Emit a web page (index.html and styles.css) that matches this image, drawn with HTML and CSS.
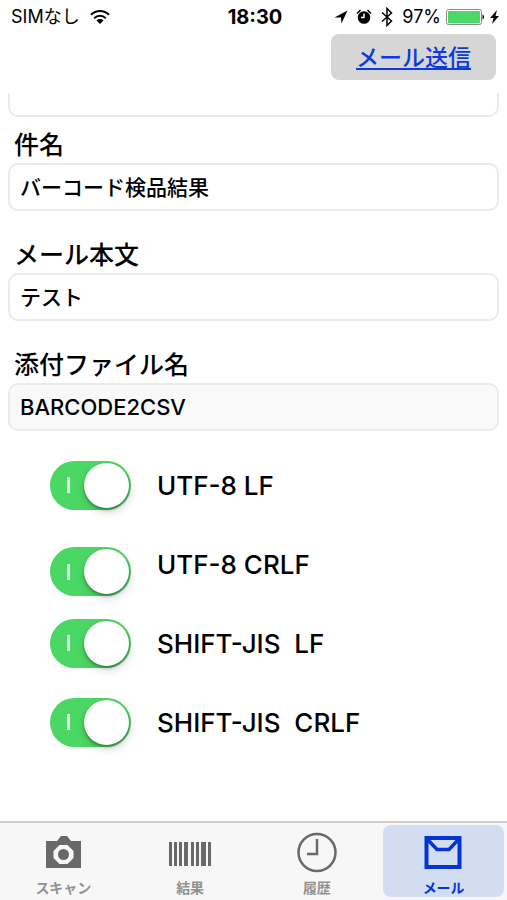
FILE: index.html
```html
<!DOCTYPE html>
<html lang="ja">
<head>
<meta charset="utf-8">
<meta name="viewport" content="width=device-width, initial-scale=1">
<title>メール</title>
<link rel="stylesheet" href="styles.css">
</head>
<body>
<div class="status">
  <div class="status-left">
    <span>SIMなし</span>
    <svg width="20" height="16" viewBox="0 0 20 16" fill="none" stroke="#000" stroke-width="2"><path d="M1 5.800C6 .7 14 .7 19 5.800M4.200 9.200c3.400-3.400 8.200-3.400 11.600 0"/><path d="M6.500 11.500c2-1.900 5-1.900 7 0L10 15z" fill="#000" stroke="none"/></svg>
  </div>
  <time class="clock">18:30</time>
  <div class="status-right">
    <svg width="14" height="14" viewBox="0 0 14 14"><path d="M13.500.5 7.500 13.500 7 7.500 .5 7.500z"/></svg>
    <svg width="16" height="16" viewBox="0 0 16 16"><circle cx="8" cy="8.500" r="6.300"/><path d="M1 4.500 4.500 1M15 4.500 11.500 1" stroke="#000" stroke-width="1.500" fill="none"/><path d="M8 4.500v4H5" stroke="#fff" stroke-width="1.500" fill="none"/></svg>
    <svg width="14" height="20" viewBox="0 0 14 20"><path d="M2 5.500 11.500 14 7 18.500V1.500L11.500 6 2 14.500" fill="none" stroke="#000" stroke-width="1.500"/></svg>
    <span>97%</span>
    <svg class="battery" width="39" height="16" viewBox="0 0 39 16"><rect x=".5" y=".5" width="35" height="15" rx="2" fill="#fff" stroke="#8b8b8b"/><rect x="2" y="2" width="32" height="12" rx="1" fill="#4cd864"/><path d="M36.500 5.500c2 .5 2 4.500 0 5z"/></svg>
    <svg width="9" height="14" viewBox="0 0 9 14"><path d="M7 0 0 8h3.500L2 14l7-8H5.500z"/></svg>
  </div>
</div>
<header class="header">
  <button class="send" type="button">メール送信</button>
</header>
<main class="content">
  <form class="form">
    <input class="input input-cut" type="email" aria-label="宛先">
    <div class="field field-first">
      <label for="subject">件名</label>
      <input class="input" id="subject" type="text" value="バーコード検品結果">
    </div>
    <div class="field">
      <label for="body">メール本文</label>
      <input class="input" id="body" type="text" value="テスト">
    </div>
    <div class="field">
      <label for="filename">添付ファイル名</label>
      <input class="input input-readonly" id="filename" type="text" value="BARCODE2CSV" readonly>
    </div>
    <div class="options">
      <div class="option"><input class="switch" type="checkbox" id="utf-lf" checked><label for="utf-lf">UTF-8 LF</label></div>
      <div class="option"><input class="switch switch-low" type="checkbox" id="utf-crlf" checked><label for="utf-crlf">UTF-8 CRLF</label></div>
      <div class="option"><input class="switch" type="checkbox" id="sjis-lf" checked><label for="sjis-lf">SHIFT-JIS  LF</label></div>
      <div class="option"><input class="switch" type="checkbox" id="sjis-crlf" checked><label for="sjis-crlf">SHIFT-JIS  CRLF</label></div>
    </div>
  </form>
</main>
<nav class="tabs">
  <a class="tab" href="#scan">
    <svg width="42" height="42" viewBox="0 0 42 42"><path fill="#696969" d="M4 9h11l4-5h6l4 5h10v27H4z"/><path fill="#f7f7f7" d="M17.500 13h8l6 6v7l-6 6h-8l-6-6v-7z"/><circle cx="21.500" cy="22.500" r="5.500" fill="#696969"/></svg>
    <span>スキャン</span>
  </a>
  <a class="tab" href="#result">
    <svg width="42" height="42" viewBox="0 0 42 42" fill="#696969"><path d="M0 10h3v24H0zM5 10h3v24H5zM10 10h3v24h-3zM15 10h4v24h-4zM22 10h3v24h-3zM27 10h3v24h-3zM32 10h5v24h-5zM39 10h3v24h-3z"/></svg>
    <span>結果</span>
  </a>
  <a class="tab" href="#history">
    <svg width="42" height="42" viewBox="0 0 42 42" fill="none" stroke="#696969" stroke-width="2.500"><circle cx="21" cy="20.500" r="18.500"/><path d="M21 7v15H11"/></svg>
    <span>履歴</span>
  </a>
  <a class="tab tab-active" href="#mail" aria-current="page">
    <svg width="42" height="42" viewBox="0 0 42 42" fill="none" stroke="#0433d6"><path d="M3.500 6h33v29h-33z" stroke-width="4"/><path d="M5 8l9 9.500h12L35 8" stroke-width="3.500"/></svg>
    <span>メール</span>
  </a>
</nav>
</body>
</html>
```
FILE: styles.css
```css
* { box-sizing: border-box; }

body {
  margin: 0;
  min-height: 100vh;
  display: flex;
  flex-direction: column;
  background: #fff;
  color: #000;
  font-family: Inter, "Noto Sans CJK JP", sans-serif;
  font-weight: 500;
}

svg { display: block; flex: none; }

.status {
  display: grid;
  grid-template-columns: 1fr auto 1fr;
  align-items: center;
  height: 34px;
  padding: 0 8px 0 11px;
  font-size: 18px;
  line-height: 24px;
  font-weight: 400;
}

.status-left, .status-right { display: flex; align-items: center; white-space: nowrap; }
.status-left { gap: 10px; }
.status-right { justify-content: flex-end; gap: 8px; }
.clock { font-size: 20px; font-weight: 700; }
.battery { margin: 0 -3px; }

.header {
  display: flex;
  justify-content: flex-end;
  padding: 0 11px 13px;
}

.send {
  width: 165px;
  height: 46px;
  padding: 0 0 2px;
  border: 0;
  border-radius: 8px;
  background: #d6d6d6;
  color: #0b3bdc;
  font: inherit;
  font-size: 23px;
  text-decoration: underline;
}

.content { flex: 1; padding: 0 8px; }

.input {
  display: block;
  width: 100%;
  height: 48px;
  padding: 0 10px 3px;
  border: 2px solid #ebebeb;
  border-radius: 10px;
  background: #fff;
  color: #000;
  font: inherit;
  font-size: 21px;
}

.input-cut {
  height: 24px;
  border-top: 0;
  border-radius: 0 0 10px 10px;
}

.input-readonly {
  padding-bottom: 0;
  background: #f9f9f9;
  font-size: 22px;
}

.field { padding-top: 26px; }
.field-first { padding-top: 10px; }

.field label {
  display: block;
  padding-left: 6px;
  font-size: 25px;
  line-height: 36px;
}

.options {
  display: grid;
  gap: 15px;
  padding: 22px 42px;
}

.option {
  display: flex;
  align-items: center;
  gap: 26px;
  height: 64px;
  font-size: 26px;
  white-space: pre;
}

.switch {
  appearance: none;
  display: flex;
  align-items: center;
  justify-content: space-between;
  flex: none;
  width: 81px;
  height: 49px;
  margin: 0;
  padding: 0 2px 0 17px;
  border-radius: 25px;
  background: #c8c8c8;
}

.switch:checked { background: #4bd763; }
.switch-low { align-self: flex-end; }

.switch::before {
  content: "";
  width: 3px;
  height: 16px;
  background: #e2fbe6;
}

.switch::after {
  content: "";
  width: 45px;
  height: 45px;
  border-radius: 50%;
  background: #fff;
  box-shadow: 0 2px 3px rgba(0, 0, 0, 0.3), 1px 4px 10px rgba(0, 0, 0, 0.16);
}

.tabs {
  display: grid;
  grid-template-columns: repeat(4, 1fr);
  height: 79px;
  border-top: 2px solid #cdcdcd;
  background: #f7f7f7;
}

.tab {
  display: flex;
  flex-direction: column;
  align-items: center;
  gap: 5px;
  margin: 2px 3px 3px;
  padding-top: 7px;
  border-radius: 8px;
  color: #929292;
  font-size: 14px;
  font-weight: 700;
  line-height: 18px;
  text-decoration: none;
}

.tab-active { background: #d3ddf2; color: #0433d6; }
```
